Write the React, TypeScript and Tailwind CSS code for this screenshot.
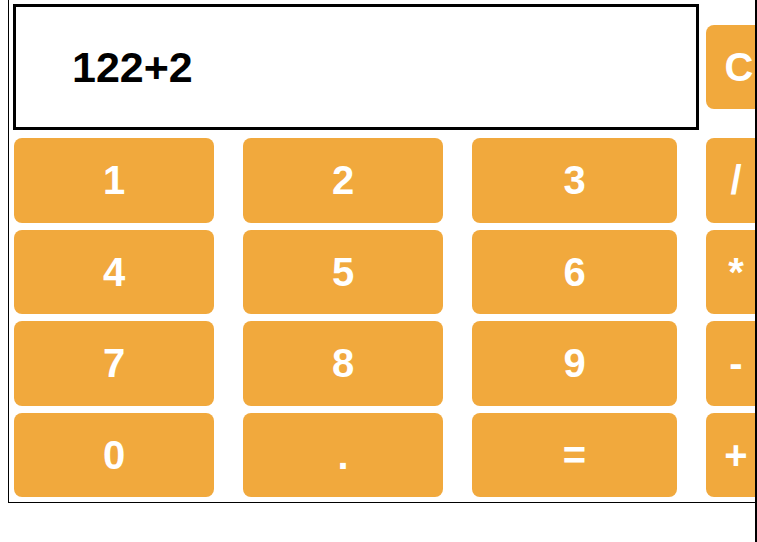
import React, { useState } from 'react';

const rows = [
  ['1', '2', '3', '/'],
  ['4', '5', '6', '*'],
  ['7', '8', '9', '-'],
  ['0', '.', '=', '+'],
];

const btn =
  'flex items-center justify-center rounded-lg bg-[#f1a93d] text-white font-bold text-[40px] leading-none h-[84.5px]';

export default function App() {
  const [expr, setExpr] = useState('122+2');

  const press = (key: string) => {
    if (key === '=') {
      try {
        // eslint-disable-next-line no-new-func
        setExpr(String(Function(`return (${expr})`)()));
      } catch {
        setExpr('Error');
      }
      return;
    }
    setExpr((prev) => prev + key);
  };

  return (
    <div className="w-[757px] h-[542px] flex overflow-hidden bg-white font-['Liberation_Sans',Arial,sans-serif]">
      <div className="ml-[8px] w-[747px] h-[503px] border-l border-b border-black overflow-hidden">
        {/* Display + clear */}
        <div className="flex items-center pl-[4px] pt-[4px]">
          <div className="w-[686px] h-[126px] shrink-0 border-[3px] border-black flex items-center pl-[56px] text-[43px] font-bold leading-none text-black">
            {expr}
          </div>
          <button onClick={() => setExpr('')} className={`${btn} ml-[7px] w-[64px] h-[84px] shrink-0 pl-[2px]`}>
            C
          </button>
        </div>

        {/* Keypad */}
        <div className="grid grid-cols-[200px_200px_205px_60px] gap-x-[29px] gap-y-[7px] pl-[5px] mt-[8px]">
          {rows.flat().map((key) => (
            <button key={key} onClick={() => press(key)} className={btn}>
              {key}
            </button>
          ))}
        </div>
      </div>
      <div className="w-[2px] h-full bg-black shrink-0" />
    </div>
  );
}
